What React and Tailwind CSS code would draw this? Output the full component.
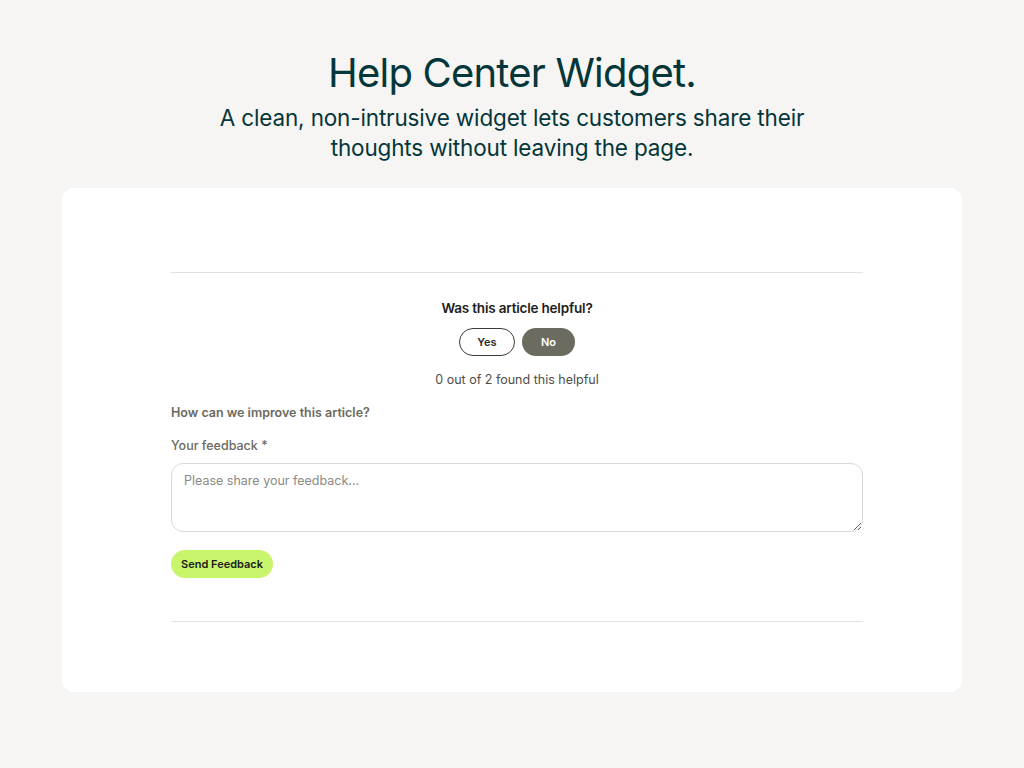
export default function App() {
  return (
    <div className="min-h-screen bg-[#f6f5f3] pt-[48px] font-['Inter',sans-serif]">
      <div className="text-center text-[#04363a]">
        <h1 className="text-[40px] leading-[50px] tracking-[-0.8px]">Help Center Widget.</h1>
        <p className="mx-auto mt-[5px] w-[600px] text-[22.5px] leading-[30px] tracking-[-0.15px]">
          A clean, non-intrusive widget lets customers share their thoughts without leaving the page.
        </p>
      </div>

      <div className="mx-auto mt-[25px] h-[504px] w-[900px] rounded-[12px] bg-white pt-[84px]">
        <div className="ml-[109px] w-[692px]">
          <div className="border-t border-[#e3e2de]" />

          <div className="flex flex-col items-center pt-[25px]">
            <div className="text-[13.5px] font-semibold leading-[20px] tracking-[-0.2px] text-[#1d1d1b]">
              Was this article helpful?
            </div>
            <div className="mt-[10px] flex gap-[7px]">
              <button className="h-[28px] w-[56px] rounded-full border border-[#3a3a36] bg-white text-[11px] font-semibold text-[#2a2a27]">
                Yes
              </button>
              <button className="h-[28px] w-[53px] rounded-full bg-[#6c6b60] text-[11px] font-semibold text-white">
                No
              </button>
            </div>
            <div className="mt-[15px] text-[12.5px] leading-[18px] text-[#4f4e49]">
              0 out of 2 found this helpful
            </div>
          </div>

          <div className="mt-[15px] text-[12.5px] font-semibold leading-[18px] text-[#6b6a60]">
            How can we improve this article?
          </div>
          <label className="mt-[15px] block text-[12.5px] font-medium leading-[18px] text-[#6b6a60]">
            Your feedback *
          </label>
          <textarea
            className="mt-[8px] block h-[69px] w-full rounded-[12px] border border-[#d9d9d6] px-[12px] py-[8px] text-[12.5px] leading-[18px] text-[#333] placeholder:text-[#8a8983] outline-none"
            placeholder="Please share your feedback..."
          />
          <button className="mt-[18px] h-[28px] rounded-full bg-[#c9f56c] px-[10px] text-[11px] font-semibold text-[#1b1b18]">
            Send Feedback
          </button>

          <div className="mt-[43px] border-t border-[#e3e2de]" />
        </div>
      </div>
    </div>
  )
}
